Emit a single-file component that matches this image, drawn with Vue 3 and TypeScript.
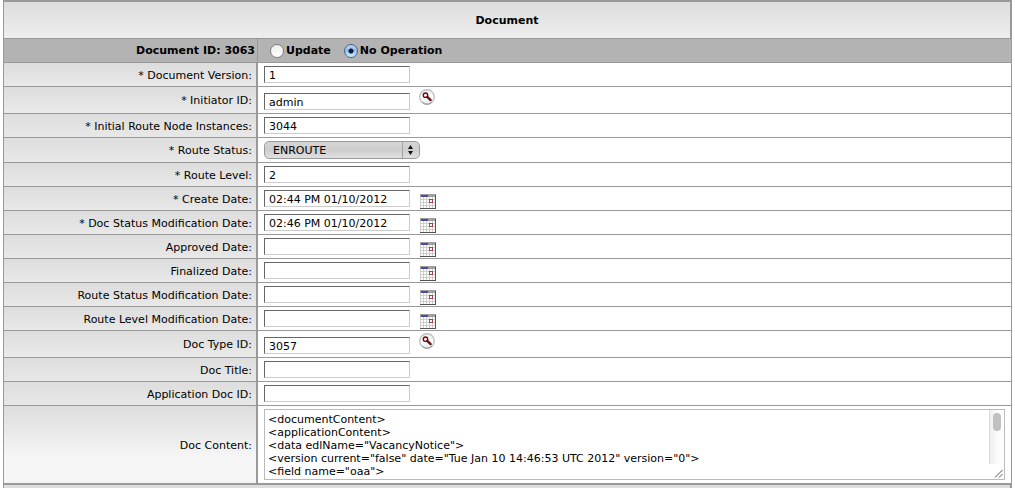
<script setup lang="ts">
import { ref } from 'vue'

type Kind = 'text' | 'lookup' | 'select' | 'date'

interface Field {
  id: string
  label: string
  required?: boolean
  kind: Kind
  value: string
}

const action = ref('none')

const fields = ref<Field[]>([
  { id: 'version', label: 'Document Version', required: true, kind: 'text', value: '1' },
  { id: 'initiator', label: 'Initiator ID', required: true, kind: 'lookup', value: 'admin' },
  { id: 'nodes', label: 'Initial Route Node Instances', required: true, kind: 'text', value: '3044' },
  { id: 'status', label: 'Route Status', required: true, kind: 'select', value: 'ENROUTE' },
  { id: 'level', label: 'Route Level', required: true, kind: 'text', value: '2' },
  { id: 'created', label: 'Create Date', required: true, kind: 'date', value: '02:44 PM 01/10/2012' },
  { id: 'modified', label: 'Doc Status Modification Date', required: true, kind: 'date', value: '02:46 PM 01/10/2012' },
  { id: 'approved', label: 'Approved Date', kind: 'date', value: '' },
  { id: 'finalized', label: 'Finalized Date', kind: 'date', value: '' },
  { id: 'statusModified', label: 'Route Status Modification Date', kind: 'date', value: '' },
  { id: 'levelModified', label: 'Route Level Modification Date', kind: 'date', value: '' },
  { id: 'docType', label: 'Doc Type ID', kind: 'lookup', value: '3057' },
  { id: 'title', label: 'Doc Title', kind: 'text', value: '' },
  { id: 'appDoc', label: 'Application Doc ID', kind: 'text', value: '' },
])

const content = ref(
  [
    '<documentContent>',
    '<applicationContent>',
    '<data edlName="VacancyNotice">',
    '<version current="false" date="Tue Jan 10 14:46:53 UTC 2012" version="0">',
    '<field name="oaa">',
  ].join('\n'),
)
</script>

<template>
  <form class="page" @submit.prevent>
    <table class="sheet">
      <colgroup>
        <col class="label-col" />
        <col />
      </colgroup>
      <thead>
        <tr>
          <th class="title" colspan="2">Document</th>
        </tr>
      </thead>
      <tbody>
        <tr class="ident">
          <th scope="row">Document ID: 3063</th>
          <td>
            <div class="actions">
              <label><input v-model="action" type="radio" name="action" value="update" />Update</label>
              <label><input v-model="action" type="radio" name="action" value="none" />No Operation</label>
            </div>
          </td>
        </tr>
        <tr v-for="f in fields" :key="f.id" class="row">
          <th scope="row">
            <label :for="f.id">{{ f.required ? '* ' : '' }}{{ f.label }}:</label>
          </th>
          <td>
            <div class="field" :class="f.kind">
              <div v-if="f.kind === 'select'" class="picker">
                <select :id="f.id" v-model="f.value">
                  <option>ENROUTE</option>
                </select>
                <svg width="17" height="18" viewBox="0 0 17 18" aria-hidden="true">
                  <path d="M.5 1v16" stroke="#a2a2a2" />
                  <path d="M6 8 8.500 4 11 8zM6 10l2.500 4L11 10z" fill="#111" />
                </svg>
              </div>
              <input v-else :id="f.id" v-model="f.value" class="box" type="text" />
              <button v-if="f.kind === 'lookup'" class="icon" type="button" :aria-label="'Search ' + f.label">
                <svg width="16" height="16" viewBox="0 0 16 16">
                  <defs>
                    <linearGradient :id="f.id + '-disc'" x1="0" y1="0" x2="0" y2="1">
                      <stop offset="0" stop-color="#e9ebec" />
                      <stop offset=".5" stop-color="#fff" />
                      <stop offset="1" stop-color="#e6e8ea" />
                    </linearGradient>
                  </defs>
                  <circle cx="8" cy="8" r="7.3" :fill="`url(#${f.id}-disc)`" stroke="#b4b9bd" stroke-width="1.2" />
                  <path d="M3 13.2a7.3 7.3 0 0 0 10 0" fill="none" stroke="#8f959a" />
                  <circle cx="6.5" cy="6.2" r="2.2" fill="#fff" stroke="#6b1015" stroke-width="1.4" />
                  <path d="m8.300 7.900 3.300 3.200" stroke="#6b1015" stroke-width="2.4" stroke-linecap="round" />
                </svg>
              </button>
              <button v-if="f.kind === 'date'" class="icon" type="button" :aria-label="'Pick ' + f.label">
                <svg width="16" height="15" viewBox="0 0 16 15" shape-rendering="crispEdges">
                  <path d="M0 0h16v15H0z" fill="#fff" />
                  <path d="M0 3h1v11H0zM3 3h1v11H3zM6 3h1v11H6zM9 3h1v11H9zM12 3h1v11h-1zM0 5h15v1H0zM0 8h15v1H0zM0 11h15v1H0z" fill="#ccc" />
                  <path d="M0 0h16v3H0z" fill="#a0a0a0" />
                  <path d="M1 1h7v2H1z" fill="#4a4aa8" />
                  <path d="M15 1h1v14h-1zM0 14h16v1H0z" fill="#555" />
                  <path d="M9 5h4v4H9z" fill="#a84444" />
                  <path d="M10 6h2v2h-2z" fill="#fff" />
                </svg>
              </button>
            </div>
          </td>
        </tr>
        <tr class="row last">
          <th scope="row"><label for="content">Doc Content:</label></th>
          <td>
            <div class="area">
              <textarea id="content" v-model="content" rows="5" wrap="off"></textarea>
              <div class="rail" aria-hidden="true">
                <div class="track"><div class="thumb"></div></div>
                <svg width="15" height="15" viewBox="0 0 15 15">
                  <path d="M6 13.500 13.500 6M10 13.500l3.500-3.500" stroke="#555" />
                </svg>
              </div>
            </div>
          </td>
        </tr>
      </tbody>
    </table>
    <div class="next"></div>
  </form>
</template>

<style>
body {
  margin: 0;
  background: #fff;
}
</style>

<style scoped>
.page {
  padding: 0 3px;
  font: 11px/13px Verdana, "DejaVu Sans", sans-serif;
  color: #000;
}

.sheet {
  width: 100%;
  table-layout: fixed;
  border-collapse: separate;
  border-spacing: 0;
  border-top: 2px solid #999;
  border-bottom: 1px solid #999;
}

.label-col {
  width: 255px;
}

th,
td {
  box-sizing: border-box;
  padding: 0;
  border-bottom: 1px solid #999;
}

th {
  border-left: 1px solid #999;
  border-right: 2px solid #999;
  background: linear-gradient(#ddd, #f5f5f5 50px);
  text-align: right;
  font-weight: normal;
}

td {
  border-right: 1px solid #999;
}

.title {
  height: 37px;
  text-align: center;
  font-weight: bold;
}

.row th {
  padding: 1px 4px 0 0;
}

.ident th,
.ident td {
  height: 24px;
  background: #b3b3b3;
  font-weight: bold;
}

.ident th {
  padding-right: 2px;
  border-right-width: 1px;
}

.actions {
  display: flex;
  gap: 13px;
  padding-left: 12px;
}

.actions label {
  display: flex;
  align-items: center;
  gap: 2px;
}

.actions input {
  appearance: none;
  box-sizing: border-box;
  width: 14px;
  height: 14px;
  margin: 0;
  border: 1px solid #808080;
  border-radius: 50%;
  background: linear-gradient(#eee, #fff);
}

.actions input:checked {
  border-color: #4c6288;
  background:
    radial-gradient(circle, #111a2c 0 2px, transparent 3px),
    linear-gradient(#b5d3f5, #8fc0f0 50%, #d2f2ff);
}

.field {
  display: flex;
  align-items: flex-start;
  gap: 10px;
  padding: 3px 6px;
}

.box {
  box-sizing: border-box;
  width: 146px;
  height: 17px;
  margin: 0;
  padding: 1px 4px 0;
  border: 1px solid #ccc;
  border-top-color: #666;
  border-left-color: #666;
  background: #fff;
  color: #000;
  font: inherit;
}

.icon {
  display: block;
  margin: 0;
  padding: 0;
  border: 0;
  background: none;
}

.icon svg {
  display: block;
}

.date {
  padding-bottom: 0;
}

.date .icon {
  padding: 4px 0 1px;
}

.lookup {
  gap: 9px;
  padding-top: 2px;
}

.lookup .box {
  margin-top: 4px;
}

.picker {
  position: relative;
}

.picker select {
  display: block;
  appearance: none;
  box-sizing: border-box;
  width: 156px;
  height: 18px;
  margin: 0;
  padding: 0 20px 0 8px;
  border: 1px solid #999;
  border-radius: 5px;
  background: linear-gradient(#d6d6d6, #cdcdcd 50%, #e0e0e0);
  color: #000;
  font: inherit;
}

.picker svg {
  position: absolute;
  top: 0;
  right: 1px;
  pointer-events: none;
}

.area {
  display: flex;
  margin: 3px 6px;
  border: 1px solid #bbb;
}

.area textarea {
  flex: 1;
  min-width: 0;
  box-sizing: border-box;
  height: 69px;
  margin: 0;
  padding: 3px 3px 0;
  border: 0;
  overflow: hidden;
  resize: none;
  background: #fff;
  color: #000;
  font: inherit;
}

.rail {
  display: flex;
  flex-direction: column;
  width: 15px;
}

.track {
  flex: 1;
  box-sizing: border-box;
  padding: 3px 3px 0;
  border-left: 1px solid #ddd;
  background: linear-gradient(to right, #f0f0f0, #fafafa 50%, #fff);
}

.thumb {
  width: 8px;
  height: 18px;
  border-radius: 4px;
  background: #c1c1c1;
}

.next {
  height: 3px;
  border-left: 1px solid #999;
  border-right: 2px solid #999;
  background: #ddd;
}
</style>
